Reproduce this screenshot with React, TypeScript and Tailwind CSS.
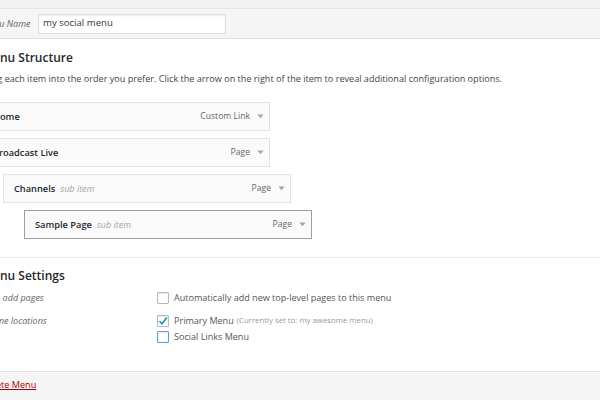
import React from 'react';

type Item = { title: string; type: string; depth: number; sub?: boolean; hover?: boolean };

const items: Item[] = [
  { title: 'Home', type: 'Custom Link', depth: 0 },
  { title: 'Broadcast Live', type: 'Page', depth: 0 },
  { title: 'Channels', type: 'Page', depth: 1, sub: true },
  { title: 'Sample Page', type: 'Page', depth: 2, sub: true, hover: true },
];

const Arrow = () => (
  <svg width="7" height="5" viewBox="0 0 7 5" className="shrink-0">
    <path d="M0.5 0.5 L6.5 0.5 L3.5 4.2 Z" fill="#a0a5aa" />
  </svg>
);

const MenuItem = ({ item }: { item: Item }) => {
  // indentation per depth level
  const indent = item.depth === 0 ? 'ml-0' : item.depth === 1 ? 'ml-[21px]' : 'ml-[42px]';
  return (
    <div
      className={`${indent} w-[288px] h-[29px] flex items-center justify-between bg-[#fafafa] border pl-[10px] pr-[5px] ${
        item.hover ? 'border-[#a0a0a0]' : 'border-[#e3e3e3]'
      }`}
    >
      <div className="flex items-center gap-[5px]">
        <span className="text-[9.25px] font-semibold text-[#23282d]">{item.title}</span>
        {item.sub && <span className="text-[9px] italic text-[#a0a5aa]">sub item</span>}
      </div>
      <div className="flex items-center gap-[7px]">
        <span className="text-[8.6px] text-[#666]">{item.type}</span>
        <Arrow />
      </div>
    </div>
  );
};

const Checkbox = ({ checked, focus }: { checked?: boolean; focus?: boolean }) => (
  <span
    className={`w-[12px] h-[12px] shrink-0 bg-white border rounded-[1px] shadow-[inset_0_1px_2px_rgba(0,0,0,0.1)] flex items-center justify-center ${
      focus ? 'border-[#5b9dd9]' : 'border-[#b4b9be]'
    }`}
  >
    {checked && (
      <svg width="10" height="10" viewBox="0 0 10 10">
        <path d="M1.5 5.2 L4 7.8 L8.8 1.5" stroke="#1e8cbe" strokeWidth="1.6" fill="none" />
      </svg>
    )}
  </span>
);

export default function App() {
  return (
    <div className="w-[600px] h-[400px] overflow-hidden bg-white font-['Open_Sans',sans-serif] flex flex-col">
      {/* top strip */}
      <div className="h-[9px] shrink-0 bg-[#f1f1f1] border-b border-[#e5e5e5]" />

      {/* menu name header */}
      <div className="h-[30px] shrink-0 bg-[#f5f5f5] border-b border-[#dfdfdf] flex items-center">
        <div className="ml-[-18px] flex items-center gap-[8px]">
          <span className="w-[48px] text-[9px] italic text-[#666] whitespace-nowrap text-right">Menu Name</span>
          <div className="w-[188px] h-[20px] bg-white border border-[#ddd] shadow-[inset_0_1px_2px_rgba(0,0,0,0.07)] flex items-center px-[4px]">
            <span className="text-[9.6px] text-[#32373c]">my social menu</span>
          </div>
        </div>
      </div>

      {/* menu structure */}
      <div className="ml-[-18px] flex flex-col">
        <h3 className="mt-[11px] text-[12px] leading-[16px] font-semibold text-[#23282d]">Menu Structure</h3>
        <p className="mt-[6px] text-[9.1px] leading-[14px] text-[#444] whitespace-nowrap">
          Drag each item into the order you prefer. Click the arrow on the right of the item to reveal additional configuration options.
        </p>
        <div className="mt-[16px] flex flex-col gap-[7px]">
          {items.map((item) => (
            <MenuItem key={item.title} item={item} />
          ))}
        </div>
      </div>

      {/* menu settings */}
      <div className="mt-[18px] border-t border-[#eee]">
        <div className="ml-[-18px] flex flex-col">
          <h3 className="mt-[10px] text-[12px] leading-[16px] font-semibold text-[#23282d]">Menu Settings</h3>
          <div className="mt-[6px] flex items-center h-[16px]">
            <span className="w-[175px] text-[9px] italic text-[#666]">Auto add pages</span>
            <label className="flex items-center gap-[5px]">
              <Checkbox />
              <span className="text-[9.05px] text-[#555]">Automatically add new top-level pages to this menu</span>
            </label>
          </div>
          <div className="mt-[7px] flex items-start">
            <span className="w-[175px] h-[16px] flex items-center text-[9px] italic text-[#666]">Theme locations</span>
            <div className="flex flex-col">
              <label className="flex items-center gap-[5px] h-[16px]">
                <Checkbox checked />
                <span className="text-[9.05px] text-[#555]">Primary Menu</span>
                <span className="ml-[-2px] text-[7.8px] text-[#999]">(Currently set to: my awesome menu)</span>
              </label>
              <label className="flex items-center gap-[5px] h-[16px]">
                <Checkbox focus />
                <span className="text-[9.05px] text-[#555]">Social Links Menu</span>
              </label>
            </div>
          </div>
        </div>
      </div>

      {/* footer */}
      <div className="mt-[26px] flex-1 bg-[#f5f5f5] border-t border-[#dfdfdf]">
        <div className="ml-[-18px] mt-[3px] leading-[14px]">
          <a className="text-[9.1px] leading-[14px] text-[#a00] underline">Delete Menu</a>
        </div>
      </div>
    </div>
  );
}
